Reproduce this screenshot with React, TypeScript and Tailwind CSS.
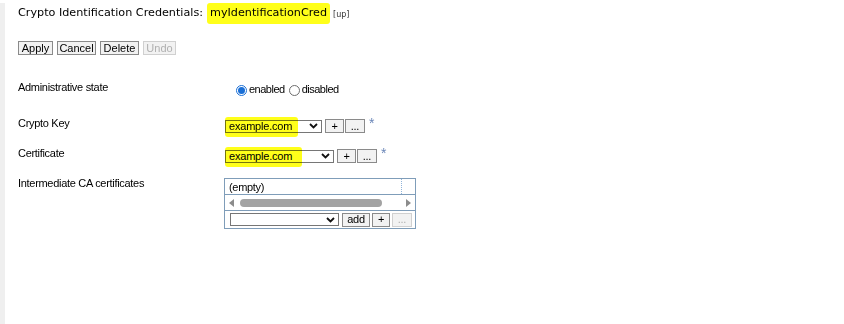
const labelFont = { fontFamily: '"Liberation Sans", Arial, sans-serif' };

function Chevron() {
  return (
    <svg width="9" height="6" viewBox="0 0 9 6" className="shrink-0">
      <path d="M1 1 L4.5 4.5 L8 1" fill="none" stroke="#111" strokeWidth="1.8" />
    </svg>
  );
}

function FakeSelect({ value, width, highlight }: { value: string; width: string; highlight?: string }) {
  return (
    <div className={`relative flex h-[13px] ${width} items-center justify-between border border-[#767676] bg-white pl-[3px] pr-[3px] text-[11px] leading-none text-black`}>
      <span className="tracking-[-0.2px]">{value}</span>
      <Chevron />
      {highlight && (
        <span
          className={`pointer-events-none absolute -left-[1px] -top-[4px] h-[20px] ${highlight} rounded-[3px] bg-[#ffff1a] mix-blend-multiply`}
        />
      )}
    </div>
  );
}

function SmallButton({ children, width, disabled }: { children: React.ReactNode; width: string; disabled?: boolean }) {
  return (
    <button
      type="button"
      disabled={disabled}
      className={`flex h-[14px] ${width} items-center justify-center border bg-[#f2f2f2] text-[11px] leading-none ${
        disabled ? "border-[#d0d0d0] text-[#b0b0b0]" : "border-[#8a8a8a] text-black"
      }`}
    >
      {children}
    </button>
  );
}

function Radio({ checked }: { checked?: boolean }) {
  return checked ? (
    <span className="flex h-[11px] w-[11px] shrink-0 items-center justify-center rounded-full border border-[#1a6fd6] bg-white">
      <span className="h-[7px] w-[7px] rounded-full bg-[#1a6fd6]" />
    </span>
  ) : (
    <span className="block h-[11px] w-[11px] shrink-0 rounded-full border border-[#6d6d6d] bg-white" />
  );
}

function Star() {
  return <span className="ml-[4px] -mt-[7px] text-[14px] leading-none text-[#6a86b8]">*</span>;
}

export default function App() {
  return (
    <div
      className="min-h-[324px] w-[844px] border-l-[5px] border-[#efefef] bg-white pl-[13px] text-black"
      style={labelFont}
    >
      {/* Title */}
      <div
        className="mt-[3px] flex h-[21px] items-center text-[11.2px]"
        style={{ fontFamily: '"DejaVu Sans", Verdana, sans-serif' }}
      >
        <span>Crypto Identification Credentials:</span>
        <span className="ml-[4px] flex h-[21px] items-center rounded-[3px] bg-[#ffff1a] px-[3px]">
          myIdentificationCred
        </span>
        <span className="ml-[3px] mt-[2px] text-[8px] text-[#333]">[up]</span>
      </div>

      {/* Action buttons */}
      <div className="mt-[17px] flex gap-[4px]">
        <SmallButton width="w-[35px]">Apply</SmallButton>
        <SmallButton width="w-[39px]">Cancel</SmallButton>
        <SmallButton width="w-[39px]">Delete</SmallButton>
        <SmallButton width="w-[33px]" disabled>
          Undo
        </SmallButton>
      </div>

      {/* Form rows */}
      <div className="mt-[25px] flex flex-col text-[11px] leading-[14px] tracking-[-0.3px]">
        <div className="flex h-[36px] items-start">
          <div className="w-[207px] shrink-0">Administrative state</div>
          <div className="mt-[2px] flex items-center pl-[11px] tracking-[-0.5px]">
            <span className="mt-[2px]">
              <Radio checked />
            </span>
            <span className="ml-[2px]">enabled</span>
            <span className="ml-[4px] mt-[2px]">
              <Radio />
            </span>
            <span className="ml-[2px]">disabled</span>
          </div>
        </div>

        <div className="flex h-[30px] items-start">
          <div className="w-[207px] shrink-0">Crypto Key</div>
          <div className="mt-[3px] flex items-center">
            <FakeSelect value="example.com" width="w-[97px]" highlight="w-[73px]" />
            <div className="ml-[3px] flex gap-[1px]">
              <SmallButton width="w-[19px]">+</SmallButton>
              <SmallButton width="w-[20px]">...</SmallButton>
            </div>
            <Star />
          </div>
        </div>

        <div className="flex h-[30px] items-start">
          <div className="w-[207px] shrink-0">Certificate</div>
          <div className="mt-[3px] flex items-center">
            <FakeSelect value="example.com" width="w-[109px]" highlight="w-[77px]" />
            <div className="ml-[3px] flex gap-[1px]">
              <SmallButton width="w-[19px]">+</SmallButton>
              <SmallButton width="w-[20px]">...</SmallButton>
            </div>
            <Star />
          </div>
        </div>

        <div className="flex items-start">
          <div className="w-[206px] shrink-0">Intermediate CA certificates</div>
          <div className="mt-[2px] w-[192px] border border-[#7f9db9]">
            <div className="flex h-[16px] items-center border-b border-[#7f9db9]">
              <span className="flex-1 pl-[4px]">(empty)</span>
              <span className="h-full w-[14px] border-l border-dotted border-[#8fb3d9]" />
            </div>
            <div className="flex h-[16px] items-center gap-[6px] border-b border-[#7f9db9] px-[4px]">
              <svg width="5" height="8" viewBox="0 0 5 8">
                <path d="M5 0 L0 4 L5 8 Z" fill="#8c8c8c" />
              </svg>
              <span className="h-[8px] w-[142px] rounded-full bg-[#a3a3a3]" />
              <span className="flex-1" />
              <svg width="5" height="8" viewBox="0 0 5 8">
                <path d="M0 0 L5 4 L0 8 Z" fill="#8c8c8c" />
              </svg>
            </div>
            <div className="flex h-[17px] items-center pl-[5px]">
              <FakeSelect value="" width="w-[109px]" />
              <div className="ml-[3px] flex gap-[2px]">
                <SmallButton width="w-[28px]">add</SmallButton>
                <SmallButton width="w-[18px]">+</SmallButton>
                <SmallButton width="w-[20px]" disabled>
                  ...
                </SmallButton>
              </div>
            </div>
          </div>
        </div>
      </div>
    </div>
  );
}
